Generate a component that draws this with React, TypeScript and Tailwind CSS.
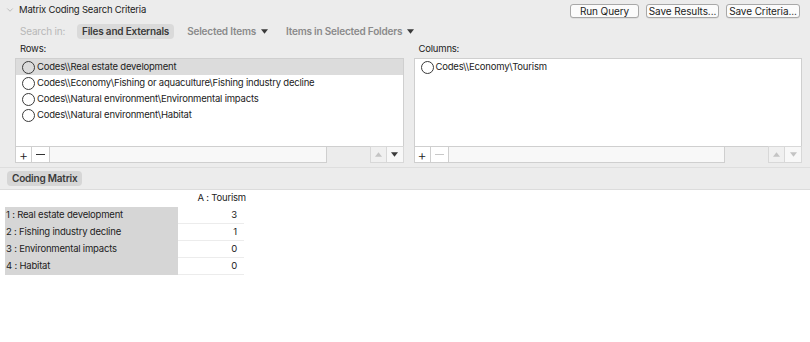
import { ChevronDown } from 'lucide-react';

const rows = [
  'Codes\\\\Real estate development',
  'Codes\\\\Economy\\Fishing or aquaculture\\Fishing industry decline',
  'Codes\\\\Natural environment\\Environmental impacts',
  'Codes\\\\Natural environment\\Habitat',
];

const matrix = [
  { label: '1 : Real estate development', value: 3 },
  { label: '2 : Fishing industry decline', value: 1 },
  { label: '3 : Environmental impacts', value: 0 },
  { label: '4 : Habitat', value: 0 },
];

function Tri({ up, dim }: { up?: boolean; dim?: boolean }) {
  return (
    <svg width="7" height="5" viewBox="0 0 8 5" className={up ? 'rotate-180' : ''}>
      <path d="M0 0 L8 0 L4 5 Z" fill={dim ? '#c4c4c4' : '#3a3a3a'} />
    </svg>
  );
}

function ItemList({ items, label, minusDim, downDim }: { items: string[]; label: string; minusDim?: boolean; downDim?: boolean }) {
  return (
    <div className="flex flex-col flex-1">
      <div className="h-[16px] pl-[5px] leading-[14px]">{label}</div>
      <div className="h-[89px] bg-white border border-[#cfcfcf] flex flex-col">
        {items.map((t, i) => (
          <div key={t} className={`h-[16px] flex items-center gap-[2px] pl-[6px] ${i === 0 && items.length > 1 ? 'bg-[#dcdcdc]' : ''}`}>
            <span className="w-[13px] h-[13px] rounded-full border-[1.5px] border-[#3a3a3a]" />
            <span>{t}</span>
          </div>
        ))}
      </div>
      <div className="flex h-[17px] mt-[-1px]">
        <div className="w-[17px] bg-white border border-[#cfcfcf] flex items-center justify-center text-[14px] font-light text-[#222]">+</div>
        <div className="w-[18px] bg-white border border-l-0 border-[#cfcfcf] flex items-center justify-center">
          <span className={`block w-[9px] h-px ${minusDim ? 'bg-[#c8c8c8]' : 'bg-[#333]'}`} />
        </div>
        <div className="flex-1 bg-[#f8f8f8] border border-l-0 border-[#cfcfcf]" />
        <div className="w-[43px]" />
        <div className="w-[17px] border border-[#d8d8d8] bg-[#f0f0f0] flex items-center justify-center"><Tri up dim /></div>
        <div className="w-[17px] border border-l-0 border-[#d8d8d8] bg-[#f8f8f8] flex items-center justify-center"><Tri dim={downDim} /></div>
      </div>
    </div>
  );
}

function Btn({ children, w }: { children: string; w: string }) {
  return (
    <div className={`${w} h-[14px] rounded-[3px] border border-[#a8a8a8] bg-[#fbfbfb] flex items-center justify-center text-[10px] tracking-[-0.1px] whitespace-nowrap text-[#222] leading-none shadow-[0_0.5px_0_#d0d0d0]`}>
      {children}
    </div>
  );
}

export default function App() {
  return (
    <div className="w-[810px] h-[342px] bg-white text-[9.5px] tracking-[-0.2px] text-[#222] font-['Inter',sans-serif] flex flex-col overflow-hidden">
      <div className="bg-[#ececec] flex flex-col">
        <div className="h-[20px] flex items-center pl-[5px] pr-[10px]">
          <ChevronDown size={10} strokeWidth={1.5} className="text-[#a0a0a0]" />
          <span className="ml-[4px] text-[9.5px] text-[#222]">Matrix Coding Search Criteria</span>
          <div className="ml-auto flex gap-[7px] pt-px">
            <Btn w="w-[69px]">Run Query</Btn>
            <Btn w="w-[73px]">Save Results...</Btn>
            <Btn w="w-[74px]">Save Criteria...</Btn>
          </div>
        </div>
        <div className="h-[22px] flex items-center pl-[20px] font-semibold text-[10px] tracking-[-0.2px]">
          <span className="font-normal text-[#b8b8b8] w-[57px]">Search in:</span>
          <span className="bg-[#dadada] rounded-[4px] h-[15px] px-[5px] flex items-center text-[#3a3a3a]">Files and Externals</span>
          <span className="ml-[13px] text-[#8a8a8a] flex items-center gap-[5px]">Selected Items <Tri /></span>
          <span className="ml-[18px] text-[#8a8a8a] flex items-center gap-[5px]">Items in Selected Folders <Tri /></span>
        </div>
        <div className="flex gap-[10px] px-[15px] pr-[8px]">
          <ItemList items={rows} label="Rows:" />
          <ItemList items={['Codes\\\\Economy\\Tourism']} label="Columns:" minusDim downDim />
        </div>
        <div className="h-[4px] border-b border-[#dedede] mt-px" />
        <div className="h-[21px] flex items-center pl-[7px]">
          <span className="bg-[#d6d6d6] rounded-[4px] h-[15px] px-[5px] flex items-center font-semibold text-[10px] text-[#3a3a3a]">Coding Matrix</span>
        </div>
      </div>
      <div className="border-t border-[#dcdcdc] pl-[5px]">
        <div className="flex h-[17px] items-center">
          <div className="w-[173px]" />
          <div className="w-[68px] text-right">A : Tourism</div>
        </div>
        {matrix.map((r) => (
          <div key={r.label} className="flex h-[17px]">
            <div className="w-[173px] bg-[#d6d6d6] flex items-center pl-px">{r.label}</div>
            <div className="w-[66px] bg-white border-b border-[#ececec] flex items-center justify-end pr-[7px]">{r.value}</div>
          </div>
        ))}
      </div>
    </div>
  );
}
